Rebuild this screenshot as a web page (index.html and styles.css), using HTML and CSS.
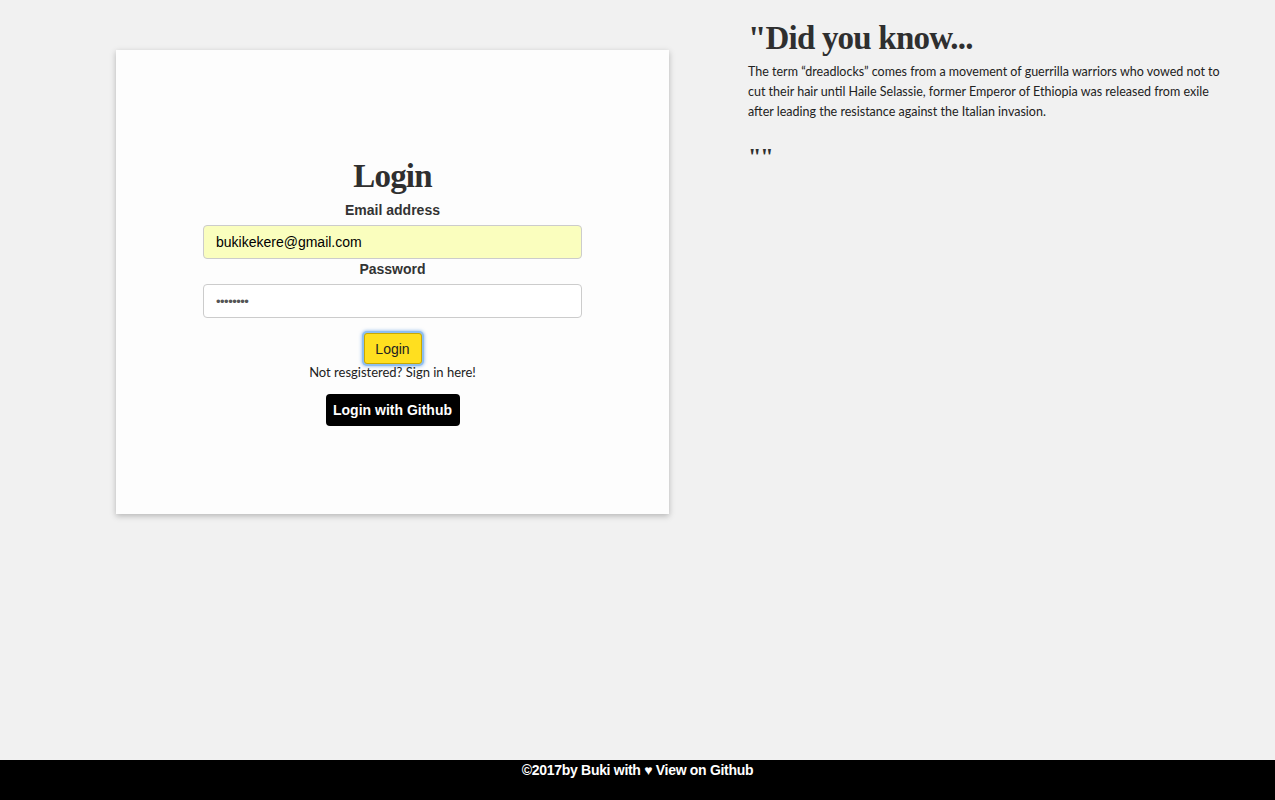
FILE: index.html
```html
<!DOCTYPE html>
<html>
<head>
<meta charset="utf-8">
<link rel="stylesheet" href="styles.css">
</head>
<body>
<div class="page">
  <div class="left">
    <div class="card">
      <h1 class="title">Login</h1>
      <form class="form">
        <label class="label">Email address</label>
        <input class="input email" type="text" value="bukikekere@gmail.com">
        <label class="label">Password</label>
        <input class="input pass" type="password" value="password">
        <button type="button" class="btn-login">Login</button>
        <p class="note">Not resgistered? Sign in here!</p>
        <button type="button" class="btn-github">Login with Github</button>
      </form>
    </div>
  </div>
  <div class="right">
    <h2 class="fact-title">"Did you know...</h2>
    <p class="fact-text">The term “dreadlocks” comes from a movement of guerrilla warriors who vowed not to cut their hair until Haile Selassie, former Emperor of Ethiopia was released from exile after leading the resistance against the Italian invasion.</p>
    <p class="quote">""</p>
  </div>
</div>
<footer class="footer">©2017by Buki with ♥ View on Github</footer>
</body>
</html>
```
FILE: styles.css
```css
html, body {
  margin: 0;
  padding: 0;
  height: 100%;
}
body {
  background: #f1f1f1;
  color: #333;
  font-family: "Liberation Sans", Arial, sans-serif;
  font-size: 14px;
  display: flex;
  flex-direction: column;
}
.page {
  flex: 1;
  display: flex;
}
.left {
  width: 748px;
  padding: 50px 0 0 116px;
  box-sizing: border-box;
}
.card {
  width: 553px;
  height: 464px;
  background: #fdfdfd;
  box-shadow: 0 2px 6px rgba(0,0,0,0.25);
  box-sizing: border-box;
  padding-top: 106px;
  display: flex;
  flex-direction: column;
  align-items: center;
}
.title {
  margin: 0 0 4px;
  font-family: "Liberation Serif", "DejaVu Serif", serif;
  font-weight: 900;
  font-size: 33px;
  line-height: 40px;
  letter-spacing: -0.8px;
  color: #2f2f2f;
}
.form {
  width: 379px;
  display: flex;
  flex-direction: column;
  align-items: center;
}
.label {
  font-weight: bold;
  font-size: 14px;
  line-height: 20px;
  margin-top: 0;
  margin-bottom: 5px;
  color: #333;
}
.input {
  width: 100%;
  height: 34px;
  box-sizing: border-box;
  border: 1px solid #ccc;
  border-radius: 4px;
  padding: 6px 12px;
  font-family: "Liberation Sans", Arial, sans-serif;
  font-size: 14px;
  color: #000;
  background: #fff;
  margin: 0;
}
.input.email {
  background: #fafebe;
}
.input.pass {
  color: #555;
  font-size: 13px;
  letter-spacing: -0.5px;
}
.btn-login {
  margin-top: 15px;
  width: 58px;
  height: 31px;
  background: #ffdf1f;
  border: 1px solid #c9a800;
  border-radius: 3px;
  box-shadow: 0 0 0 2px #8dbef0, 0 0 3px 3px rgba(100,160,230,0.5);
  font-family: "Liberation Sans", Arial, sans-serif;
  font-size: 14px;
  color: #222;
  padding: 0;
}
.note {
  margin: 0;
  font-family: "Lato", sans-serif;
  font-size: 13px;
  line-height: 16px;
  color: #222;
}
.btn-github {
  margin-top: 14px;
  width: 134px;
  height: 32px;
  background: #000;
  color: #fff;
  border: none;
  border-radius: 4px;
  font-family: "Liberation Sans", Arial, sans-serif;
  font-weight: bold;
  font-size: 14px;
  padding: 0;
}
.right {
  width: 480px;
  padding-top: 18px;
}
.fact-title {
  margin: 0;
  font-family: "Liberation Serif", "DejaVu Serif", serif;
  font-weight: 900;
  font-size: 33px;
  line-height: 40px;
  letter-spacing: -0.8px;
  color: #2f2f2f;
}
.fact-text {
  margin: 4px 0 0;
  font-family: "Lato", sans-serif;
  font-size: 12.5px;
  line-height: 20px;
  color: #222;
}
.quote {
  margin: 22px 0 0;
  font-family: "Liberation Serif", serif;
  font-weight: 900;
  font-size: 24px;
  line-height: 24px;
  letter-spacing: -1px;
  color: #2f2f2f;
}
.footer {
  height: 40px;
  background: #000;
  color: #fff;
  font-weight: bold;
  font-size: 14px;
  line-height: 20px;
  text-align: center;
  letter-spacing: -0.3px;
}
```
